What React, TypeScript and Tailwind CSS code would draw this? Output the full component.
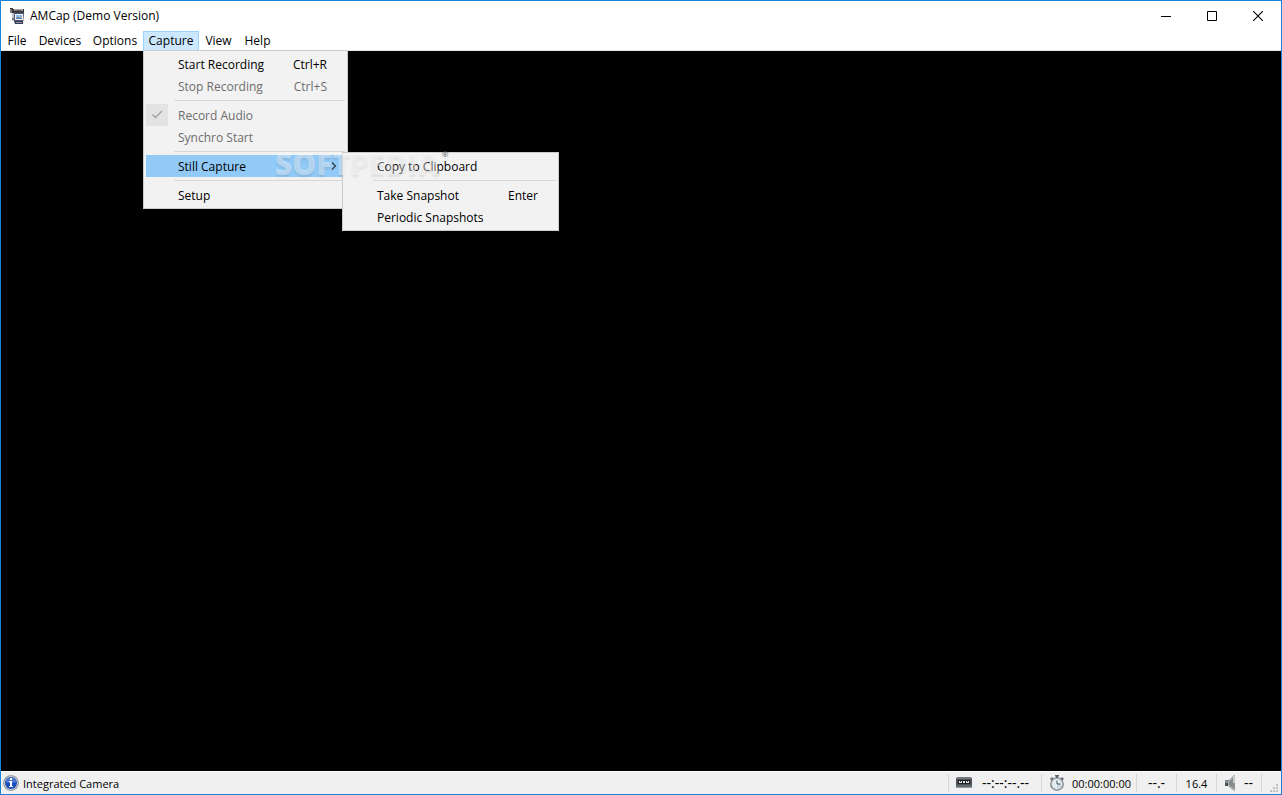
import React from "react";

type Item = {
  label: string;
  shortcut?: string;
  disabled?: boolean;
  checked?: boolean;
  submenu?: Entry[];
};

type Entry = Item | "separator";

const menus = [
  { label: "File", width: "w-8" },
  { label: "Devices", width: "w-[54px]" },
  { label: "Options", width: "w-14" },
  { label: "Capture", width: "w-14" },
  { label: "View", width: "w-[39px]" },
  { label: "Help", width: "w-[39px]" },
];

const captureMenu: Entry[] = [
  { label: "Start Recording", shortcut: "Ctrl+R" },
  { label: "Stop Recording", shortcut: "Ctrl+S", disabled: true },
  "separator",
  { label: "Record Audio", disabled: true, checked: true },
  { label: "Synchro Start", disabled: true },
  "separator",
  {
    label: "Still Capture",
    submenu: [
      { label: "Copy to Clipboard" },
      "separator",
      { label: "Take Snapshot", shortcut: "Enter" },
      { label: "Periodic Snapshots" },
    ],
  },
  "separator",
  { label: "Setup" },
];

function AppIcon() {
  return (
    <svg className="size-4 shrink-0" viewBox="0 0 16 16" aria-hidden="true">
      <path d="M1 0h3v1h11v3H5v2H3V5H1z" fill="#3a3234" />
      <path d="M1 1h2v4H1z" fill="#77777f" />
      <path d="M5 1h9v2H5z" fill="#a3a0a2" />
      <path d="M6 2h6v1H6z" fill="#6b676b" />
      <path d="M3 5h2v8H3z" fill="#c4c5ca" />
      <path d="M3 10h2v2H3z" fill="#777b86" />
      <path d="M5 4h10l-1 12H6l-1-3z" fill="#3a3f58" />
      <path d="M5 5h9v8H5z" fill="#4e546f" />
      <path d="M6 6h8v6H6z" fill="#f6f6f6" />
      <path d="M7 7h6v2H7z" fill="#86bdf0" />
      <path d="M7 9h6v1H7z" fill="#f2c27d" />
      <path d="M7 10l2-1 4 1v1H7z" fill="#4f7fb5" />
      <path d="M7 14h6v1H7z" fill="#8c91a8" />
    </svg>
  );
}

function InfoIcon() {
  return (
    <svg className="size-4 shrink-0" viewBox="0 0 16 16" aria-hidden="true">
      <circle cx="8" cy="8" r="7.8" fill="#7c8088" />
      <circle cx="8" cy="8" r="7" fill="#c9cdd6" />
      <circle cx="8" cy="8" r="6" fill="#1d4fb8" />
      <path d="M2.5 7a5.6 5.6 0 0 1 11 0c-3 1.5-8 1.5-11 0z" fill="#4c78d0" />
      <path d="M7 3h2v2H7zM6 6h3v6H7V7H6z" fill="#fff" />
      <path d="M6 11h4v1H6z" fill="#dfe7f7" />
    </svg>
  );
}

function TapeIcon() {
  return (
    <svg className="h-3 w-4 shrink-0" viewBox="0 0 16 12" aria-hidden="true">
      <path d="M1 0h14l1 2v9H0V2z" fill="#4c5054" />
      <path d="M1 0h14v2H1z" fill="#75797c" />
      <path d="M2 3h12v4H2z" fill="#1f2224" />
      <path d="M3 4h3v2H3zM7 4h2v2H7zM10 4h3v2h-3z" fill="#e4e4e4" />
      <path d="M4 4h1v1H4zM11 4h1v1h-1z" fill="#333" />
      <path d="M0 8h16v2H0z" fill="#5f6b70" />
      <path d="M0 10h16v1H0z" fill="#939799" />
    </svg>
  );
}

function StopwatchIcon() {
  return (
    <svg className="size-4 shrink-0" viewBox="0 0 16 16" aria-hidden="true">
      <path d="M6 0h4v1.5H9V3H7V1.5H6z" fill="#5c6166" />
      <path d="M1 4l2-2 1.5 1.5-2 2zM15 4l-2-2-1.5 1.5 2 2z" fill="#666c71" />
      <circle cx="8" cy="9" r="6.8" fill="#6d7379" />
      <circle cx="8" cy="9" r="6" fill="#b5bcc1" />
      <circle cx="8" cy="9" r="4.9" fill="#e6edf0" />
      <path d="M8 9h4a4 4 0 0 1-4 4z" fill="#c5d8e2" />
      <path d="M8 5.5V9h3.5" fill="none" stroke="#45545f" strokeWidth="1" />
    </svg>
  );
}

function SpeakerIcon() {
  return (
    <svg className="size-4 shrink-0" viewBox="0 0 16 16" aria-hidden="true">
      <path d="M1 5h4v6H1z" fill="#4d5254" />
      <path d="M1 5h3v3H1z" fill="#85898b" />
      <path d="M4 6l6-6h1v16h-1l-6-5z" fill="#a6aaac" />
      <path d="M5 7l4-4v10l-4-3z" fill="#868b8e" />
      <path d="M9 1h2v14H9z" fill="#c6c9cb" />
      <path d="M9 8h2v6H9z" fill="#8b9093" />
    </svg>
  );
}

function Grip() {
  return (
    <svg className="size-2" viewBox="0 0 8 8" aria-hidden="true">
      <path d="M6 0h2v2H6zM3 3h2v2H3zM6 3h2v2H6zM0 6h2v2H0zM3 6h2v2H3zM6 6h2v2H6z" fill="#bfbfbf" />
    </svg>
  );
}

function MenuItem({ item }: { item: Item }) {
  const row = "flex h-[22px] w-full items-center pt-0.5 pr-[18px] pl-8 text-left whitespace-nowrap";

  if (item.checked) {
    return (
      <li className="relative">
        <label htmlFor="record-audio" className={`${row} text-[#6d6d6d]`}>
          {item.label}
        </label>
        <input
          id="record-audio"
          type="checkbox"
          defaultChecked
          disabled
          className="absolute top-0 left-0 size-[22px] appearance-none bg-[#e3e3e3]"
        />
        <svg className="pointer-events-none absolute top-0 left-0 size-[22px]" viewBox="0 0 22 22" aria-hidden="true">
          <path d="M6.5 10.5l3 3 6.5-6.5" fill="none" stroke="#a0a0a0" strokeWidth="1.4" />
        </svg>
      </li>
    );
  }

  return (
    <li className="relative">
      <button
        type="button"
        disabled={item.disabled}
        className={`${row} ${item.disabled ? "text-[#6d6d6d]" : "text-black"} ${item.submenu ? "bg-[#91c9f7]" : ""}`}
      >
        {item.label}
        {item.shortcut && <span className="ml-auto">{item.shortcut}</span>}
        {item.submenu && (
          <svg className="-mr-2.5 mb-0.5 ml-auto h-2 w-1.5" viewBox="0 0 6 8" aria-hidden="true">
            <path d="M1 0.5L4.5 4 1 7.5" fill="none" stroke="#333" strokeWidth="1.1" />
          </svg>
        )}
      </button>
      {item.submenu && (
        <div className="absolute -top-[3px] left-[196px] z-10">
          <Menu entries={item.submenu} className="w-[217px]" />
        </div>
      )}
    </li>
  );
}

function Menu({ entries, className }: { entries: Entry[]; className: string }) {
  return (
    <ul className={`border border-[#ccc] bg-[#f2f2f2] p-0.5 ${className}`}>
      {entries.map((entry, i) =>
        entry === "separator" ? (
          <li key={i} role="separator" className="flex h-[7px] items-center pl-7">
            <span className="h-px w-full bg-[#d7d7d7]" />
          </li>
        ) : (
          <MenuItem key={i} item={entry} />
        )
      )}
    </ul>
  );
}

function TitleBar() {
  return (
    <header className="flex h-[30px] shrink-0 items-center bg-white pl-2">
      <AppIcon />
      <h1 className="ml-[5px]">AMCap (Demo Version)</h1>
      <div className="ml-auto flex h-full">
        <button type="button" aria-label="Minimize" className="flex w-[46px] items-center justify-center">
          <svg className="size-[10px]" viewBox="0 0 10 10">
            <path d="M0 5h10v1H0z" />
          </svg>
        </button>
        <button type="button" aria-label="Maximize" className="flex w-[46px] items-center justify-center">
          <svg className="size-[10px]" viewBox="0 0 10 10">
            <path d="M.5 .5h9v9h-9z" fill="none" stroke="#000" />
          </svg>
        </button>
        <button type="button" aria-label="Close" className="flex w-[46px] items-center justify-center">
          <svg className="size-[10px]" viewBox="0 0 10 10">
            <path d="M0 0l10 10M10 0L0 10" fill="none" stroke="#000" strokeWidth="1.1" />
          </svg>
        </button>
      </div>
    </header>
  );
}

function MenuBar() {
  return (
    <nav className="flex h-5 shrink-0 border-b border-[#e8e8e8] bg-white">
      {menus.map((menu) => (
        <div key={menu.label} className={`relative ${menu.width}`}>
          <button
            type="button"
            className={`h-[19px] w-full text-center ${
              menu.label === "Capture" ? "border border-b-0 border-[#99d1ff] bg-[#cce8ff] leading-[18px]" : "leading-5"
            }`}
          >
            {menu.label}
          </button>
          {menu.label === "Capture" && (
            <div className="absolute top-[19px] left-0 z-10">
              <Menu entries={captureMenu} className="w-[205px]" />
              {/* Watermark over both menus */}
              <div className="pointer-events-none absolute top-[99px] left-[132px] z-20 flex gap-0.5 text-[30px] leading-[30px] font-extrabold text-white/40 [text-shadow:0_2px_2px_rgb(0_0_0/0.08)]">
                SOFTPEDIA
                <span className="text-[8px] leading-[10px] font-normal text-[#666]">®</span>
              </div>
            </div>
          )}
        </div>
      ))}
    </nav>
  );
}

function StatusBar() {
  const cell = "my-0.5 flex items-center border-l border-[#d7d7d7]";

  return (
    <footer className="flex h-[23px] shrink-0 border-t border-white bg-[#f0f0f0] text-[11px]">
      <div className="flex flex-1 items-center gap-1 pl-0.5">
        <InfoIcon />
        <span className="pt-px">Integrated Camera</span>
      </div>
      <div className={`${cell} w-[93px] gap-2.5 pl-[7px]`}>
        <TapeIcon />
        <span className="text-sm leading-4">--:--:--.--</span>
      </div>
      <div className={`${cell} w-[95px] gap-[7px] pl-[7px]`}>
        <StopwatchIcon />
        <span className="pt-px">00:00:00:00</span>
      </div>
      <div className={`${cell} w-10 justify-center text-sm leading-4`}>--.-</div>
      <div className={`${cell} w-10 justify-center pt-px`}>16.4</div>
      <div className={`${cell} w-[45px] gap-1 pl-[7px]`}>
        <SpeakerIcon />
        <span className="text-sm leading-4">--</span>
      </div>
      <div className={`${cell} w-5 items-end justify-end pr-[3px]`}>
        <Grip />
      </div>
    </footer>
  );
}

export default function App() {
  return (
    <div className="flex h-screen flex-col border border-[#1883d7] bg-white font-['Open_Sans','Noto_Sans',sans-serif] text-[12px] leading-4 text-black">
      <TitleBar />
      <MenuBar />
      <main className="flex-1 bg-black" aria-label="Camera preview" />
      <StatusBar />
    </div>
  );
}
